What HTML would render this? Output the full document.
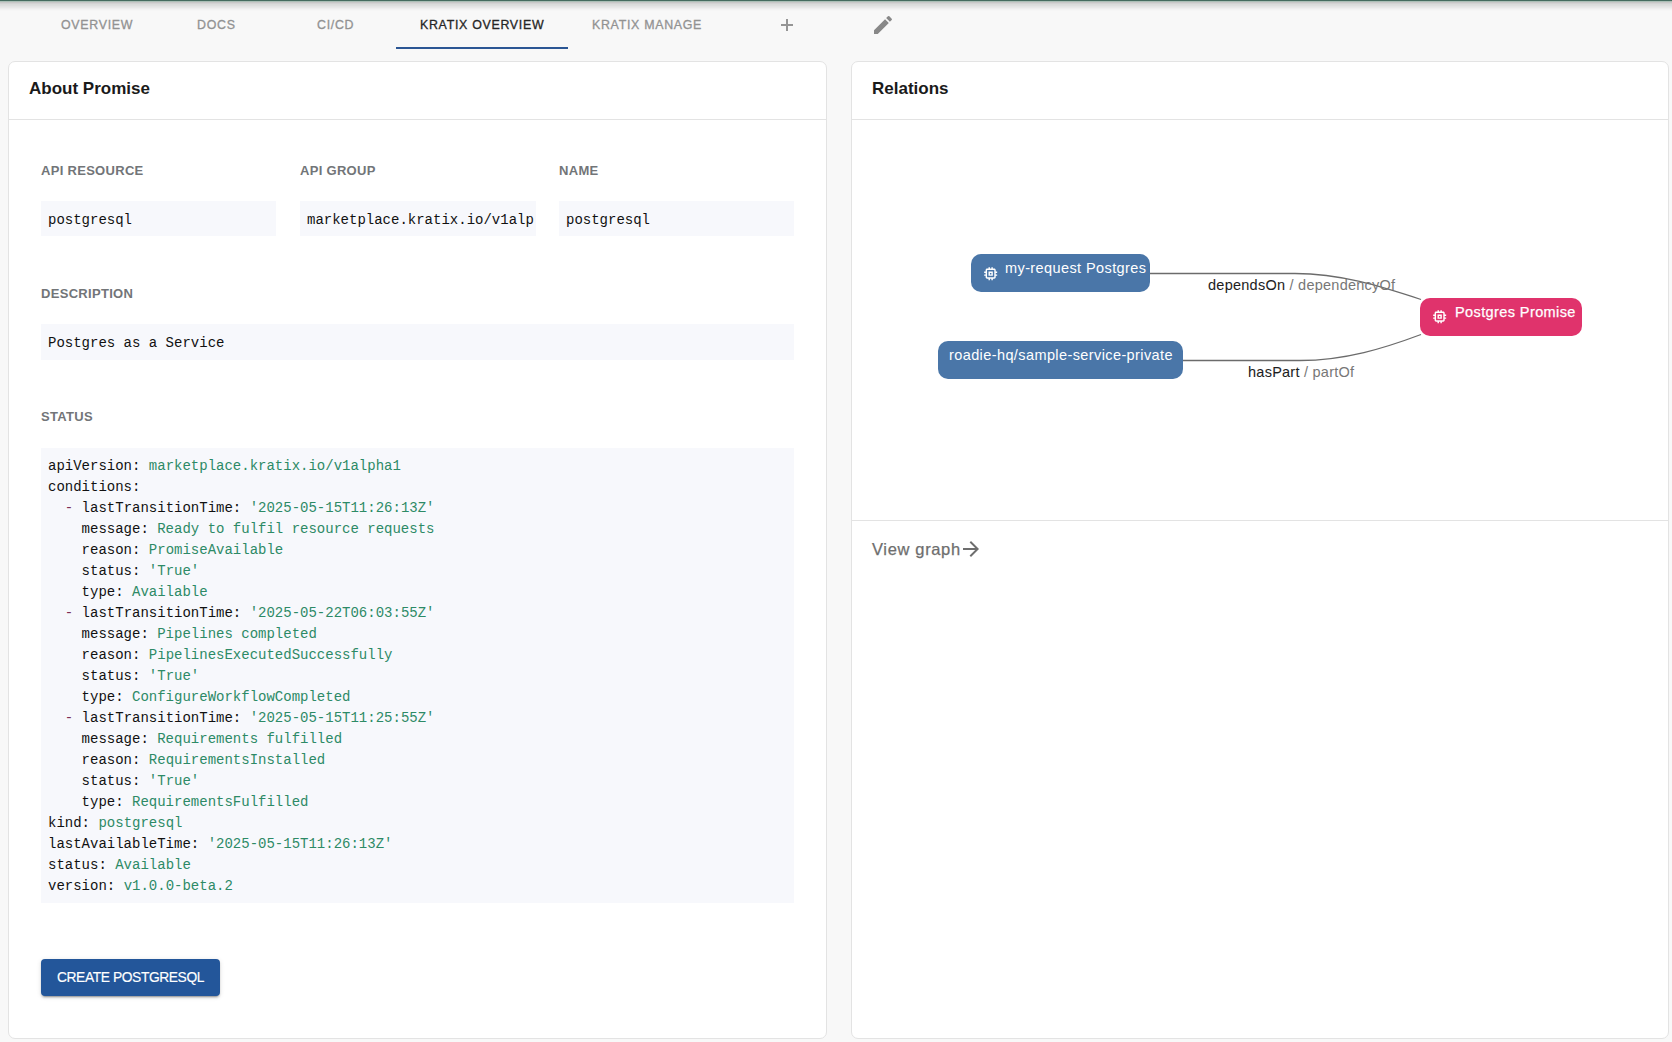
<!DOCTYPE html>
<html><head><meta charset="utf-8">
<style>
*{box-sizing:border-box;margin:0;padding:0}
html,body{width:1672px;height:1042px;overflow:hidden;background:#f8f8f8;font-family:"Liberation Sans",sans-serif;color:#181818}
.abs{position:absolute;white-space:nowrap}
#topline{position:absolute;left:0;top:0;width:1672px;height:1px;background:#456c5f}
#topshadow{position:absolute;left:0;top:1px;width:1672px;height:10px;background:linear-gradient(#abbfb6 0 1px,#c8c8c8 1px 2px,#d3d3d3 2px 3px,#dadcdb 3px 4px,#dddfde 4px 5px,#e3e4e4 5px 6px,#e8e8e8 6px 7px,#eeeeee 7px 8px,#f3f3f3 8px 9px,#f6f6f6 9px 10px)}
.tab{position:absolute;top:18px;font-size:12.4px;line-height:15px;letter-spacing:0.7px;color:#929292;-webkit-text-stroke:0.3px #929292}
.tab.sel{color:#262626;-webkit-text-stroke:0.3px #262626}
#underline{position:absolute;left:396px;top:47px;width:172px;height:2px;background:#2b5694}
.card{position:absolute;top:61px;height:978px;background:#fff;border:1px solid #e3e3e3;border-radius:7px}
.ctitle{position:absolute;font-size:17px;font-weight:bold;line-height:20px;color:#1a1a1a}
.divider{position:absolute;height:1px;background:#e3e3e3}
.lbl{position:absolute;font-size:13px;font-weight:bold;line-height:14px;color:#727578;letter-spacing:0.3px}
.box{position:absolute;background:#f7f8fc;overflow:hidden;font-family:"Liberation Mono",monospace;font-size:14px;line-height:38px;padding-left:7px;color:#111}
.in{overflow:hidden}
.code{position:absolute;left:41px;top:448px;width:753px;height:455px;background:#f7f8fc;font-family:"Liberation Mono",monospace;font-size:14px;line-height:21px;color:#111;padding:8px 7px;white-space:pre}
.g{color:#2d8a66}
.r{color:#7e2f55}
#btn{position:absolute;left:41px;top:959px;width:179px;height:37px;background:#23569a;border-radius:4px;box-shadow:0 3px 1px -2px rgba(0,0,0,.2),0 2px 2px 0 rgba(0,0,0,.14),0 1px 5px 0 rgba(0,0,0,.12);color:#fff;font-size:13.8px;line-height:37px;text-align:center;letter-spacing:-0.4px;-webkit-text-stroke:0.15px #fff}
.node{position:absolute;height:38px;border-radius:10px;color:#fff;font-size:14px}
.nt{font-size:14.5px;line-height:16px;color:#fff;letter-spacing:0.4px}
.elbl{position:absolute;font-size:14.5px;line-height:16px;color:#1e1e1e;letter-spacing:0.25px;-webkit-text-stroke:0.05px #1e1e1e}
.elbl span{color:#777;-webkit-text-stroke:0}
</style></head>
<body>
<div id="topline"></div><div id="topshadow"></div>

<div class="tab" style="left:61px">OVERVIEW</div>
<div class="tab" style="left:197px">DOCS</div>
<div class="tab" style="left:317px">CI/CD</div>
<div class="tab sel" style="left:420px">KRATIX OVERVIEW</div>
<div class="tab" style="left:592px">KRATIX MANAGE</div>
<div id="underline"></div>
<svg class="abs" style="left:781px;top:19px" width="12" height="12" viewBox="0 0 12 12"><path d="M0 6H12M6 0V12" stroke="#959595" stroke-width="2"/></svg>
<svg class="abs" style="left:871px;top:13px" width="24" height="24" viewBox="0 0 24 24"><path fill="#888888" d="M3 17.25V21h3.75L17.81 9.94l-3.75-3.75L3 17.25zM20.71 7.04c.39-.39.39-1.02 0-1.41l-2.34-2.34a.9959.9959 0 0 0-1.41 0l-1.83 1.83 3.75 3.75 1.83-1.83z"/></svg>

<!-- LEFT CARD -->
<div class="card" style="left:8px;width:819px"></div>
<div class="ctitle" style="left:29px;top:79px">About Promise</div>
<div class="divider" style="left:9px;top:119px;width:817px"></div>

<div class="lbl" style="left:41px;top:164px">API RESOURCE</div>
<div class="lbl" style="left:300px;top:164px">API GROUP</div>
<div class="lbl" style="left:559px;top:164px">NAME</div>
<div class="box" style="left:41px;top:201px;width:235px;height:35px"><div class="in">postgresql</div></div>
<div class="box" style="left:300px;top:201px;width:236px;height:35px"><div class="in" style="width:227px">marketplace.kratix.io/v1alpha1</div></div>
<div class="box" style="left:559px;top:201px;width:235px;height:35px"><div class="in">postgresql</div></div>

<div class="lbl" style="left:41px;top:287px">DESCRIPTION</div>
<div class="box" style="left:41px;top:324px;width:753px;height:36px;line-height:39px">Postgres as a Service</div>

<div class="lbl" style="left:41px;top:410px">STATUS</div>
<div class="code">apiVersion: <span class="g">marketplace.kratix.io/v1alpha1</span>
conditions:
  <span class="r">-</span> lastTransitionTime: <span class="g">'2025-05-15T11:26:13Z'</span>
    message: <span class="g">Ready to fulfil resource requests</span>
    reason: <span class="g">PromiseAvailable</span>
    status: <span class="g">'True'</span>
    type: <span class="g">Available</span>
  <span class="r">-</span> lastTransitionTime: <span class="g">'2025-05-22T06:03:55Z'</span>
    message: <span class="g">Pipelines completed</span>
    reason: <span class="g">PipelinesExecutedSuccessfully</span>
    status: <span class="g">'True'</span>
    type: <span class="g">ConfigureWorkflowCompleted</span>
  <span class="r">-</span> lastTransitionTime: <span class="g">'2025-05-15T11:25:55Z'</span>
    message: <span class="g">Requirements fulfilled</span>
    reason: <span class="g">RequirementsInstalled</span>
    status: <span class="g">'True'</span>
    type: <span class="g">RequirementsFulfilled</span>
kind: <span class="g">postgresql</span>
lastAvailableTime: <span class="g">'2025-05-15T11:26:13Z'</span>
status: <span class="g">Available</span>
version: <span class="g">v1.0.0-beta.2</span></div>

<div id="btn">CREATE POSTGRESQL</div>

<!-- RIGHT CARD -->
<div class="card" style="left:851px;width:818px"></div>
<div class="ctitle" style="left:872px;top:79px">Relations</div>
<div class="divider" style="left:852px;top:119px;width:816px"></div>
<div class="divider" style="left:852px;top:520px;width:816px"></div>

<svg class="abs" style="left:0;top:0" width="1672" height="1042">
<path d="M1150 273.5 L1295 273.5 C1340 273.5 1380 286 1421 299.5" fill="none" stroke="#6b6b6b" stroke-width="1.3"/>
<path d="M1183 360.5 L1300 360.5 C1345 360.5 1385 348 1421 334.5" fill="none" stroke="#6b6b6b" stroke-width="1.3"/>
</svg>

<div class="node" style="left:971px;top:254px;width:179px;background:#4a76a8"></div>
<div class="node" style="left:938px;top:341px;width:245px;background:#4a76a8"></div>
<div class="node" style="left:1420px;top:298px;width:162px;background:#e0336c"></div>

<div class="abs nt" style="left:1005px;top:260px">my-request Postgres</div>
<div class="abs nt" style="left:949px;top:347px">roadie-hq/sample-service-private</div>
<div class="abs nt" style="left:1455px;top:304px;-webkit-text-stroke:0.25px #fff">Postgres Promise</div>

<svg class="abs" style="left:981.7px;top:264.7px" width="17.33" height="17.33" viewBox="0 0 24 24"><path fill="#fff" d="M15 9H9v6h6V9zm-2 4h-2v-2h2v2zm8-2V9h-2V7c0-1.1-.9-2-2-2h-2V3h-2v2h-2V3H9v2H7c-1.1 0-2 .9-2 2v2H3v2h2v2H3v2h2v2c0 1.1.9 2 2 2h2v2h2v-2h2v2h2v-2h2c1.1 0 2-.9 2-2v-2h2v-2h-2v-2h2zm-4 6H7V7h10v10z"/></svg>
<svg class="abs" style="left:1430.8px;top:308.3px" width="17.33" height="17.33" viewBox="0 0 24 24"><path fill="#fff" d="M15 9H9v6h6V9zm-2 4h-2v-2h2v2zm8-2V9h-2V7c0-1.1-.9-2-2-2h-2V3h-2v2h-2V3H9v2H7c-1.1 0-2 .9-2 2v2H3v2h2v2H3v2h2v2c0 1.1.9 2 2 2h2v2h2v-2h2v2h2v-2h2c1.1 0 2-.9 2-2v-2h2v-2h-2v-2h2zm-4 6H7V7h10v10z"/></svg>
<div class="elbl" style="left:1208px;top:277px">dependsOn <span>/ dependencyOf</span></div>
<div class="elbl" style="left:1248px;top:364px">hasPart <span>/ partOf</span></div>

<div class="abs" style="left:872px;top:540px;font-size:16.5px;line-height:18px;color:#6e6e6e;letter-spacing:0.65px;-webkit-text-stroke:0.25px #6e6e6e">View graph</div>
<svg class="abs" style="left:959px;top:536.5px" width="24" height="24" viewBox="0 0 24 24"><path fill="#6e6e6e" d="M12 4l-1.41 1.41L16.17 11H4v2h12.17l-5.58 5.59L12 20l8-8z"/></svg>
</body></html>
